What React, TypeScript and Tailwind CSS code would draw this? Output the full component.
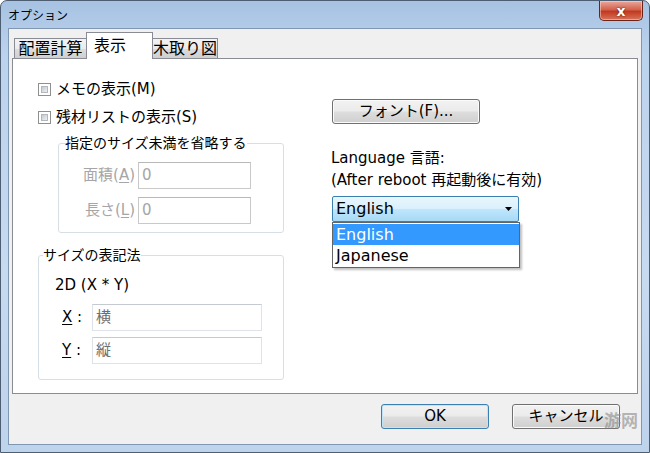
import React from 'react';

const font = "font-['DejaVu_Sans','Noto_Sans_CJK_JP',sans-serif]";

const Checkbox: React.FC<{ label: string }> = ({ label }) => (
  <div className="flex items-center h-[20px]">
    <span className="w-[13px] h-[13px] border border-[#8f8f8f] bg-white p-[2px] flex">
      <span className="flex-1 bg-[linear-gradient(135deg,#c4c9d0,#eef0f2)] border border-[#b3b6bb]" />
    </span>
    <span className="ml-[5px] text-[15px] leading-[20px]">{label}</span>
  </div>
);

const TextBox: React.FC<{ value: string; w: string; disabled?: boolean }> = ({ value, w, disabled }) => (
  <div
    className={`${w} h-[27px] flex items-center pl-[3px] bg-white border text-[15px] ${
      disabled
        ? 'border-[#c9c9c9] border-t-[#b8b8b8] text-[#a6a6a6]'
        : 'border-[#dfe3e9] border-t-[#c5c9d0] text-[#6d6d6d]'
    }`}
  >
    {value}
  </div>
);

const WinButton: React.FC<{ children: React.ReactNode; primary?: boolean }> = ({ children, primary }) => (
  <button
    className={`w-[108px] h-[25px] rounded-[3px] border text-[15px] leading-none bg-[linear-gradient(#f2f2f2,#ebebeb_48%,#dddddd_52%,#cfcfcf)] ${
      primary
        ? 'border-[#3c7fb1] shadow-[inset_0_0_0_1px_#bfe4f8]'
        : 'border-[#707070] shadow-[inset_0_0_0_1px_#fbfbfb]'
    }`}
  >
    {children}
  </button>
);

const Tab: React.FC<{ label: string; active?: boolean; w: string }> = ({ label, active, w }) =>
  active ? (
    <div className={`${w} h-[27px] -mb-px -ml-px relative z-10 bg-white border border-b-0 border-[#898c95] flex items-center pl-[7px] text-[16px]`}>
      {label}
    </div>
  ) : (
    <div className={`${w} h-[20px] bg-[linear-gradient(#f3f3f3,#ebebeb_50%,#dddddd_50%,#cfcfcf)] border border-b-0 border-[#898c95] flex items-center justify-center text-[16px]`}>
      {label}
    </div>
  );

const Accel: React.FC<{ text: string; k: string; rest: string }> = ({ text, k, rest }) => (
  <span>
    {text}
    <span className="underline underline-offset-2">{k}</span>
    {rest}
  </span>
);

export default function App() {
  return (
    <div
      className={`w-[650px] h-[453px] relative overflow-hidden flex flex-col ${font} text-black rounded-t-[7px] border border-[#4d5d72] bg-[linear-gradient(180deg,#a7c2e2_0%,#bcd3ee_12%,#c6daf0_60%,#bed3ec_100%)]`}
    >
      {/* title bar */}
      <div className="h-[27px] flex items-center pl-[7px] text-[12px] font-['Noto_Sans_CJK_JP',sans-serif]">
        オプション
      </div>
      <div className="absolute top-0 right-[6px] w-[44px] h-[20px] rounded-b-[5px] border border-t-0 border-[#6b2518] bg-[linear-gradient(#e9a99c,#d3624e_45%,#c2391f_55%,#d6745c)] flex items-center justify-center shadow-[inset_0_0_0_1px_rgba(255,220,210,0.5)]">
        <span className="text-white font-bold text-[14px] leading-none font-['DejaVu_Sans',sans-serif] [text-shadow:0_0_2px_#3a0c05]">x</span>
      </div>

      {/* client */}
      <div className="mx-[7px] mb-[7px] flex-1 border border-[#8196b0] bg-[#f0f0f0] flex flex-col">
        <div className="h-[29px] flex items-end pl-[5px] pt-[3px]">
          <Tab label="配置計算" w="w-[73px]" />
          <Tab label="表示" active w="w-[67px]" />
          <div className="-ml-px">
            <Tab label="木取り図" w="w-[66px]" />
          </div>
        </div>

        {/* tab panel */}
        <div className="mx-[3px] h-[336px] bg-white border border-[#898c95] flex pl-[25px] pt-[20px]">
          {/* left column */}
          <div className="w-[246px] flex flex-col">
            <Checkbox label="メモの表示(M)" />
            <div className="mt-[8px]">
              <Checkbox label="残材リストの表示(S)" />
            </div>

            <fieldset className="ml-[20px] w-[226px] mt-[6px] border border-[#d5dfe5] rounded-[3px] pt-[9px] pb-[8px]">
              <legend className="ml-[6px] text-[14px] leading-[20px]">指定のサイズ未満を省略する</legend>
              <div className="flex items-center">
                <div className="w-[76px] text-right text-[15px] text-[#a6a6a6]">
                  <Accel text="面積(" k="A" rest=")" />
                </div>
                <div className="ml-[3px]">
                  <TextBox value="0" w="w-[113px]" disabled />
                </div>
              </div>
              <div className="flex items-center mt-[8px]">
                <div className="w-[76px] text-right text-[15px] text-[#a6a6a6]">
                  <Accel text="長さ(" k="L" rest=")" />
                </div>
                <div className="ml-[3px]">
                  <TextBox value="0" w="w-[113px]" disabled />
                </div>
              </div>
            </fieldset>

            <fieldset className="w-[246px] mt-[12px] border border-[#d5dfe5] rounded-[3px] pt-[10px] pb-[15px]">
              <legend className="ml-[4px] text-[14px] leading-[20px]">サイズの表記法</legend>
              <div className="pl-[16px] text-[15px] leading-[20px]">2D (X * Y)</div>
              <div className="flex items-center mt-[9px] pl-[23px]">
                <div className="w-[30px] text-[15px]">
                  <span className="underline underline-offset-2">X</span> :
                </div>
                <TextBox value="横" w="w-[170px]" />
              </div>
              <div className="flex items-center mt-[6px] pl-[23px]">
                <div className="w-[30px] text-[15px]">
                  <span className="underline underline-offset-2">Y</span> :
                </div>
                <TextBox value="縦" w="w-[170px]" />
              </div>
            </fieldset>
          </div>

          {/* right column */}
          <div className="ml-[48px] flex flex-col">
            <button className="mt-[20px] w-[148px] h-[25px] rounded-[3px] border border-[#707070] shadow-[inset_0_0_0_1px_#fbfbfb] bg-[linear-gradient(#f2f2f2,#ebebeb_48%,#dddddd_52%,#cfcfcf)] text-[15px] leading-none">
              フォント(F)...
            </button>
            <div className="mt-[23px] text-[15px] leading-[22px] -ml-px">
              <div>Language 言語:</div>
              <div>(After reboot 再起動後に有効)</div>
            </div>
            <div className="mt-[5px] relative w-[187px]">
              <div className="h-[26px] rounded-[2px] border border-[#3c7fb1] bg-[linear-gradient(#eaf6fd,#d9f0fc_48%,#bee6fd_52%,#a7d9f5)] flex items-center pl-[3px] pr-[6px] text-[16px]">
                <span className="flex-1">English</span>
                <svg width="7" height="4" viewBox="0 0 7 4">
                  <path d="M0 0h7L3.5 4z" fill="#000" />
                </svg>
              </div>
              <div className="absolute top-[26px] left-0 w-[188px] border border-[#646464] bg-white shadow-[2px_2px_2px_rgba(0,0,0,0.25)] text-[16px] py-px">
                <div className="h-[21px] leading-[21px] px-[3px] bg-[#3399ff] text-white">English</div>
                <div className="h-[21px] leading-[21px] px-[3px]">Japanese</div>
              </div>
            </div>
          </div>
        </div>

        {/* buttons */}
        <div className="flex justify-end gap-[23px] pr-[21px] pt-[10px]">
          <WinButton primary>OK</WinButton>
          <WinButton>キャンセル</WinButton>
        </div>
      </div>

      {/* watermark */}
      <div className="absolute left-[603px] top-[406px] text-[17px] text-[#8a8a8a]/60 font-bold font-['Noto_Sans_CJK_SC',sans-serif]">
        游网
      </div>
    </div>
  );
}
